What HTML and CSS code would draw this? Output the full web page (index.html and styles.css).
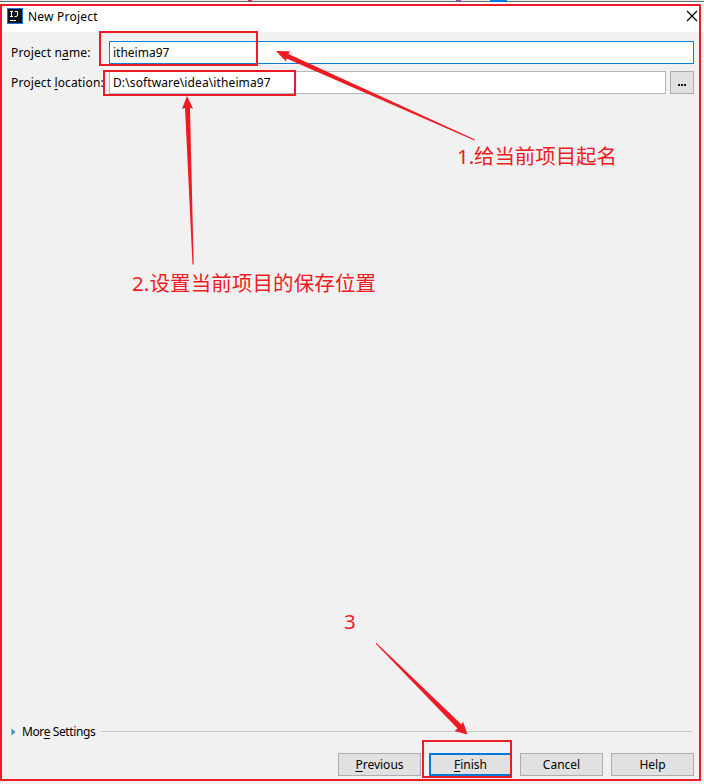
FILE: index.html
```
<!DOCTYPE html>
<html lang="zh-CN">
<head>
<meta charset="utf-8">
<title>New Project</title>
<link rel="stylesheet" href="styles.css">
</head>
<body>
<main class="window">
  <div class="backdrop"><i class="speck speck-red"></i><i class="speck speck-purple"></i><i class="speck speck-blue"></i></div>
  <header class="titlebar">
    <svg class="logo" width="16" height="16" viewBox="0 0 16 16">
      <rect width="16" height="16" fill="#1678e8"/>
      <rect x="1" y="1" width="14" height="14" fill="#111319"/>
      <path d="M3 3.500h3M4.500 3.500v5M3 8.500h3M8 3.500h2.500v3.500q0 1.500-1.500 1.500H7.500M3 12.500h6" fill="none" stroke="#fff" stroke-width="1"/>
    </svg>
    <h1 class="title">New Project</h1>
    <svg class="close" width="12" height="12" viewBox="0 0 12 12"><path d="M1 1l10 10M11 1L1 11" stroke="#000" stroke-width="1.15"/></svg>
  </header>
  <section class="form">
    <div class="row">
      <label class="label">Project n<u>a</u>me:</label>
      <div class="field field-focus">itheima97</div>
    </div>
    <div class="row">
      <label class="label">Project <u>l</u>ocation:</label>
      <div class="field field-path">D:\software\idea\itheima97</div>
      <button class="browse"><i></i><i></i><i></i></button>
    </div>
  </section>
  <section class="more">
    <svg width="5" height="8" viewBox="0 0 5 8"><path d="M.5 0.500L4.500 4L.5 7.500z" fill="#3d8fbd"/></svg>
    <span class="more-label">Mor<u>e</u> Settings</span>
    <span class="rule"></span>
  </section>
  <footer class="actions">
    <button class="btn"><u>P</u>revious</button>
    <button class="btn btn-default"><u>F</u>inish</button>
    <button class="btn">Cancel</button>
    <button class="btn">Help</button>
  </footer>
  <svg class="notes" width="704" height="784" viewBox="0 0 704 784">
    <g class="frames">
      <rect x="1" y="5" width="699" height="775"/>
      <rect x="100" y="32" width="157" height="33"/>
      <rect x="104" y="71" width="191" height="24"/>
      <rect x="423" y="741" width="88" height="36"/>
    </g>
    <g class="arrows">
      <path d="M276 51L290 51.300L288.500 54L475 139.500L474.500 140.500L286.500 58.500L286 61.500z"/>
      <path d="M187 96L193 108.500L190 108L193.700 264.500H192.500L185 108L182 109z"/>
      <path d="M467.500 734.500L454.500 731L457.500 728.500L375.500 643.500L376.500 643L461.500 724.500L463 721.500z"/>
    </g>
    <g class="captions">
      <text x="457" y="163.500" textLength="160">1.给当前项目起名</text>
      <text x="132" y="290.500" textLength="244">2.设置当前项目的保存位置</text>
      <text x="344" y="629">3</text>
    </g>
  </svg>
</main>
</body>
</html>
```
FILE: styles.css
```
* { box-sizing: border-box; }
body { margin: 0; background: #f1f1f1; color: #000; font: 12px/16px "Noto Sans", "Open Sans", sans-serif; }
u { text-decoration-thickness: 1px; text-underline-offset: 2px; text-decoration-skip-ink: none; }
button { font: inherit; color: inherit; padding: 0; border-radius: 0; }
.window { position: relative; width: 704px; height: 784px; overflow: hidden; display: flex; flex-direction: column; }
.backdrop { position: relative; height: 2px; background: linear-gradient(#e8eaea 50%, #657068 50%); }
.speck { position: absolute; top: 0; height: 2px; }
.speck-red { left: 248px; width: 4px; background: #c83442; }
.speck-purple { left: 456px; width: 5px; background: #9151a0; }
.speck-blue { left: 490px; width: 17px; background: #087fe8; }
.titlebar { height: 30px; background: #fff; display: flex; align-items: flex-start; padding: 6px 6px 0 7px; }
.title { margin: 1px 0 0 5px; font-size: 12px; line-height: 16px; font-weight: 400; letter-spacing: .22px; }
.close { margin: 2px 0 0 auto; }
.form { padding: 9px 10px 0 11px; display: flex; flex-direction: column; gap: 7px; }
.row { display: flex; height: 23px; align-items: center; }
.label { width: 98px; flex: none; white-space: nowrap; letter-spacing: .14px; }
.field { flex: 1; height: 23px; border: 1px solid #b7b7b7; background: #fff; padding: 3px 3px; white-space: nowrap; }
.field-focus { border-color: #0b7fd5; }
.field-path { letter-spacing: .11px; }
.browse { width: 24px; height: 23px; margin-left: 4px; border: 1px solid #adadad; background: #e1e1e1; display: flex; justify-content: center; align-items: center; gap: 1px; padding-top: 5px; }
.browse i { width: 2px; height: 2px; background: #111; }
.more { margin-top: auto; height: 16px; padding: 0 12px 0 11px; display: flex; align-items: center; }
.more-label { margin-left: 6px; width: 73px; white-space: nowrap; letter-spacing: -.4px; }
.rule { height: 1px; background: #c8c8c8; flex: 1; margin: 0 0 1px 6px; }
.actions { display: flex; justify-content: flex-end; gap: 8px; padding: 13px 10px 8px; }
.btn { width: 83px; height: 23px; border: 1px solid #adadad; background: #e1e1e1; line-height: 19px; }
.btn-default { border: 2px solid #0078d7; line-height: 17px; }
.notes { position: absolute; inset: 0; pointer-events: none; }
.frames { fill: none; stroke: #ed1c24; stroke-width: 2; }
.arrows { fill: #ed1c24; }
.captions { fill: #ed1c24; font: 400 20.500px "Noto Sans", "Noto Sans CJK SC", sans-serif; }
```
